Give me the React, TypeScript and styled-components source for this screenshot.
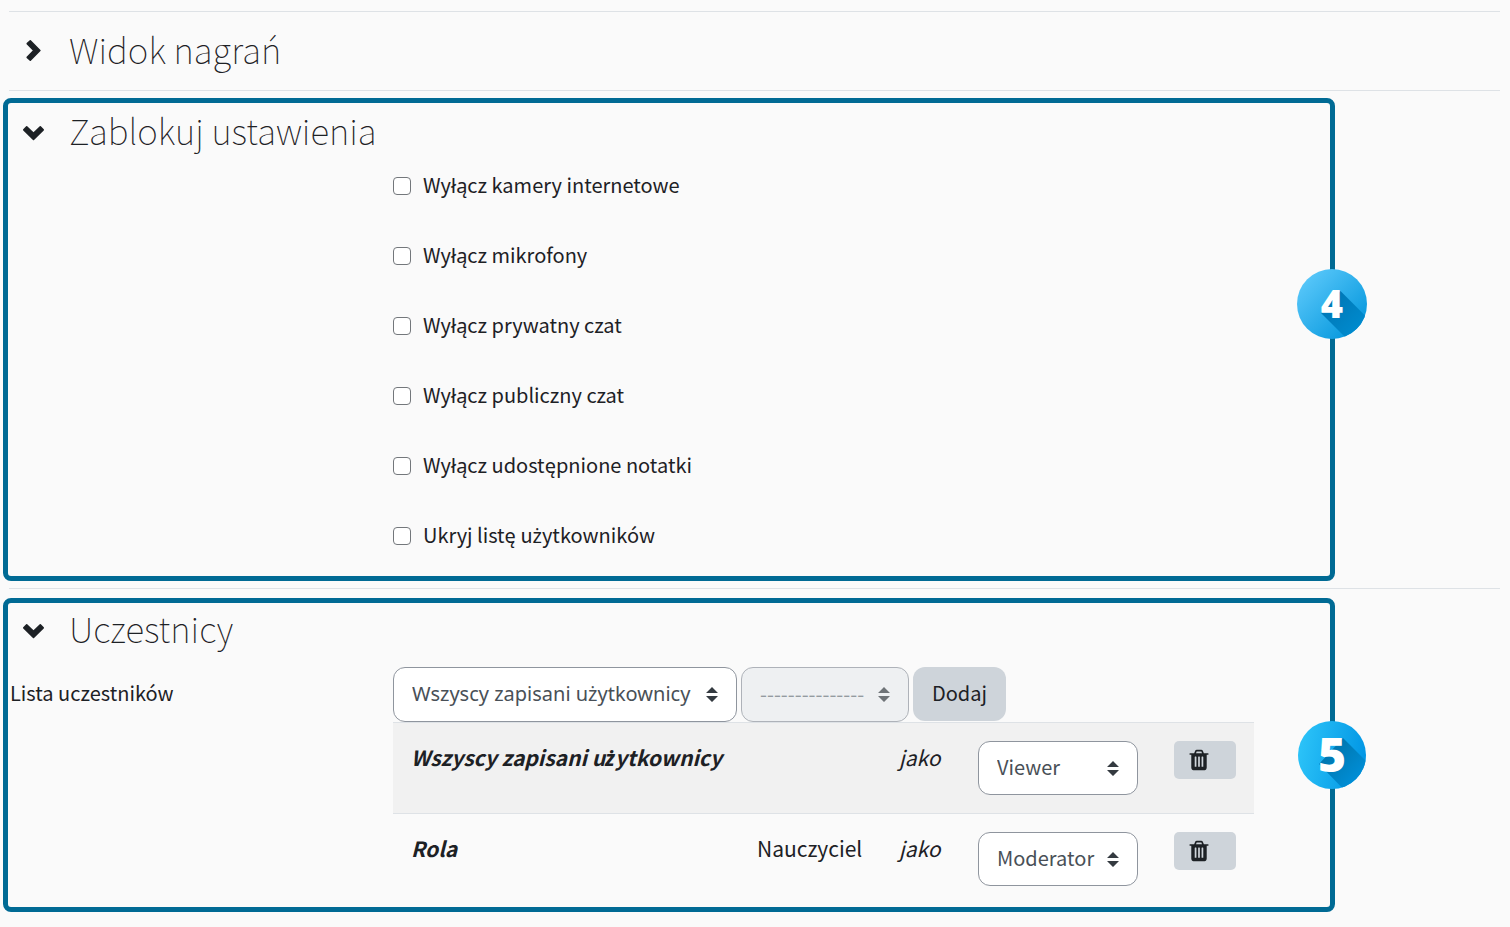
import React, { Fragment, useId } from "react";
import styled, { createGlobalStyle } from "styled-components";

const GlobalStyle = createGlobalStyle`
  *, *::before, *::after { box-sizing: border-box; }
  body {
    margin: 0;
    background: #fafafa;
    color: #1d2125;
    font-family: "Noto Sans CJK SC", "Noto Sans", sans-serif;
    font-size: 20px;
    line-height: 30px;
  }
  button, select, input { font: inherit; color: inherit; margin: 0; }
`;

const Page = styled.main`
  padding-top: 11px;
`;

const Divider = styled.hr`
  height: 1px;
  margin: 0 10px 0 9px;
  border: 0;
  background: #dee2e6;
`;

const Collapsed = styled.section`
  padding: 15px 8px;
`;

const Frame = styled.section<{ $before: number; $top: number; $bottom: number }>`
  position: relative;
  margin: ${(p) => p.$before}px 175px 7px 3px;
  padding: ${(p) => p.$top}px 0 ${(p) => p.$bottom}px;
  border: 5px solid #006a94;
  border-radius: 8px;
`;

const HeadingRow = styled.div`
  display: flex;
  align-items: center;
  gap: 22px;
  height: 48px;
  padding-left: 13px;
`;

const Toggle = styled.button`
  display: flex;
  padding: 0;
  border: 0;
  background: none;
  cursor: pointer;
`;

const Heading = styled.h3`
  margin: 0;
  padding-bottom: 4px;
  font-size: 35px;
  line-height: 44px;
  font-weight: 100;
`;

const CheckList = styled.ul`
  display: grid;
  gap: 36px;
  margin: 13px 0 0 385px;
  padding: 0;
  list-style: none;
`;

const CheckLabel = styled.label`
  display: inline-flex;
  align-items: center;
  gap: 12px;
  height: 34px;
`;

const CheckText = styled.span`
  padding-bottom: 2px;
`;

const CheckBox = styled.input`
  appearance: none;
  width: 18px;
  height: 18px;
  border: 1px solid #73777b;
  border-radius: 4px;
  background: #fff;
  &:checked { background: #006a94; }
`;

const FormRow = styled.div`
  display: grid;
  grid-template-columns: 383px auto;
  justify-content: start;
  margin-top: 13px;
  padding-left: 2px;
`;

const FieldLabel = styled.label`
  line-height: 52px;
`;

const Controls = styled.div`
  display: flex;
  gap: 4px;
`;

const SelectWrap = styled.span<{ $width: number; $disabled?: boolean }>`
  display: grid;
  align-items: center;
  width: ${(p) => p.$width}px;
  opacity: ${(p) => (p.$disabled ? 0.7 : 1)};
  > * { grid-area: 1 / 1; }
  > svg { justify-self: end; margin-right: 19px; pointer-events: none; }
`;

const SelectBox = styled.select<{ $height: number; $polish?: boolean }>`
  appearance: none;
  width: 100%;
  height: ${(p) => p.$height}px;
  padding: 0 34px 2px 18px;
  border: 1px solid #8f959e;
  border-radius: 12px;
  background: #fff;
  color: #495057;
  font-family: ${(p) => (p.$polish ? '"Noto Sans", sans-serif' : "inherit")};
  &:disabled { background: #e9ecef; color: #6a737b; opacity: 1; }
`;

const AddButton = styled.button`
  width: 93px;
  height: 54px;
  padding: 0 0 2px;
  border: 0;
  border-radius: 12px;
  background: #ced4da;
`;

const People = styled.table`
  width: 861px;
  table-layout: fixed;
  border-collapse: separate;
  border-spacing: 0;
`;

const PersonRow = styled.tr`
  &:nth-child(odd) { background: #f1f1f1; }
`;

const Cell = styled.td`
  padding: 18px;
  border-top: 1px solid #dee2e6;
  font-size: 21px;
  line-height: 32px;
  vertical-align: top;
  text-align: left;
  white-space: nowrap;
`;

const ControlCell = styled(Cell)`
  font-size: 20px;
`;

const Name = styled.span`
  font-weight: 700;
  font-style: italic;
`;

const DottedZ = styled.span`
  font-family: "Noto Sans", sans-serif;
`;

const DeleteButton = styled.button`
  display: flex;
  align-items: center;
  width: 62px;
  height: 38px;
  padding: 0 0 0 13px;
  border: 0;
  border-radius: 5px;
  background: #ced4da;
`;

const Badge = styled.svg<{ $top: number; $right: number }>`
  position: absolute;
  top: ${(p) => p.$top}px;
  right: ${(p) => p.$right}px;
`;

const BadgeDigit = styled.text`
  font-family: "Open Sans", sans-serif;
  font-weight: 800;
  fill: #fff;
  text-anchor: middle;
`;

/* The main face has no ż of its own, so that letter is set in its companion face. */
function Polish({ text }: { text: string }) {
  return (
    <>
      {text.split("ż").map((part, i) => (
        <Fragment key={i}>
          {i > 0 && <DottedZ>ż</DottedZ>}
          {part}
        </Fragment>
      ))}
    </>
  );
}

function Chevron({ open }: { open?: boolean }) {
  return (
    <svg width="26" height="26" viewBox="0 0 26 26" aria-hidden="true">
      <path
        transform={open ? "rotate(90 11.7 13.3)" : undefined}
        d="M6.2 5.7 9.3 2.8 18.9 12.5 9.3 22.2 6.2 19.3 12.8 12.5Z"
        fill="#1d2125"
        stroke="#1d2125"
        strokeWidth="1.6"
        strokeLinejoin="round"
      />
    </svg>
  );
}

function SortArrows() {
  return (
    <svg width="12" height="15" viewBox="0 0 4 5" aria-hidden="true">
      <path fill="#343a40" d="M2 0L0 2h4zm0 5L0 3h4z" />
    </svg>
  );
}

function Trash() {
  return (
    <svg width="24" height="24" viewBox="0 0 1792 1792" aria-hidden="true">
      <path
        fill="#1d2125"
        d="M704 1376v-704q0-14-9-23t-23-9h-64q-14 0-23 9t-9 23v704q0 14 9 23t23 9h64q14 0 23-9t9-23zm256 0v-704q0-14-9-23t-23-9h-64q-14 0-23 9t-9 23v704q0 14 9 23t23 9h64q14 0 23-9t9-23zm256 0v-704q0-14-9-23t-23-9h-64q-14 0-23 9t-9 23v704q0 14 9 23t23 9h64q14 0 23-9t9-23zm-544-992h448l-48-117q-7-9-17-11h-317q-10 2-17 11zm928 32v64q0 14-9 23t-23 9h-96v948q0 83-47 143.500t-113 60.5h-832q-66 0-113-58.5t-47-141.5v-952h-96q-14 0-23-9t-9-23v-64q0-14 9-23t23-9h309l70-167q15-37 54-63t79-26h320q40 0 79 26t54 63l70 167h309q14 0 23 9t9 23z"
      />
    </svg>
  );
}

type SelectProps = {
  width: number;
  height?: number;
  label?: string;
  options: string[];
  value?: string;
  disabled?: boolean;
  id?: string;
};

function Select({ width, height = 54, label, options, value, disabled, id }: SelectProps) {
  return (
    <SelectWrap $width={width} $disabled={disabled}>
      <SelectBox
        id={id}
        $height={height}
        $polish={options.some((o) => o.includes("ż"))}
        aria-label={label}
        defaultValue={value ?? options[0]}
        disabled={disabled}
      >
        {options.map((o) => (
          <option key={o}>{o}</option>
        ))}
      </SelectBox>
      <SortArrows />
    </SelectWrap>
  );
}

function SectionHeading({ title, open }: { title: string; open?: boolean }) {
  return (
    <HeadingRow>
      <Toggle type="button" aria-expanded={!!open} aria-label={title}>
        <Chevron open={open} />
      </Toggle>
      <Heading>{title}</Heading>
    </HeadingRow>
  );
}

const locks = [
  "Wyłącz kamery internetowe",
  "Wyłącz mikrofony",
  "Wyłącz prywatny czat",
  "Wyłącz publiczny czat",
  "Wyłącz udostępnione notatki",
  "Ukryj listę użytkowników",
];

const people = [
  { name: "Wszyscy zapisani użytkownicy", who: "", role: "Viewer" },
  { name: "Rola", who: "Nauczyciel", role: "Moderator" },
];

function StepFour() {
  const id = useId();
  return (
    <Badge $top={166} $right={-37} width="70" height="70" viewBox="0 0 70 70">
      <defs>
        <linearGradient id={`${id}bg`} x1="0.1" y1="0.1" x2="0.9" y2="0.9">
          <stop offset="0" stopColor="#5ac8fa" />
          <stop offset="1" stopColor="#0396dc" />
        </linearGradient>
        <linearGradient id={`${id}sh`} x1="0.2" y1="0.2" x2="0.9" y2="0.9">
          <stop offset="0" stopColor="#0079b8" />
          <stop offset="1" stopColor="#0093d8" />
        </linearGradient>
        <clipPath id={`${id}c`}>
          <circle cx="35" cy="35" r="35" />
        </clipPath>
      </defs>
      <circle cx="35" cy="35" r="35" fill={`url(#${id}bg)`} />
      <path clipPath={`url(#${id}c)`} fill={`url(#${id}sh)`} d="M43.500 22 80 58.500V78H58L24 44Z" />
      <BadgeDigit x="35" y="49" fontSize="38">4</BadgeDigit>
    </Badge>
  );
}

function StepFive() {
  const id = useId();
  return (
    <Badge $top={118} $right={-36} width="68" height="68" viewBox="0 0 68 68">
      <defs>
        <linearGradient id={`${id}bg`} x1="0" y1="0.4" x2="1" y2="0.6">
          <stop offset="0" stopColor="#2cc3f8" />
          <stop offset="1" stopColor="#0095e4" />
        </linearGradient>
        <linearGradient id={`${id}sh`} x1="0.2" y1="0.2" x2="0.8" y2="0.8">
          <stop offset="0" stopColor="#0077b0" />
          <stop offset="1" stopColor="#0095e2" />
        </linearGradient>
        <clipPath id={`${id}c`}>
          <circle cx="34" cy="34" r="34" />
        </clipPath>
      </defs>
      <circle cx="34" cy="34" r="34" fill={`url(#${id}bg)`} />
      <path clipPath={`url(#${id}c)`} fill={`url(#${id}sh)`} d="M45 17 80 52V78H55L21 43Z" />
      <BadgeDigit x="34" y="51" fontSize="48">5</BadgeDigit>
    </Badge>
  );
}

export default function App() {
  return (
    <Page lang="pl">
      <GlobalStyle />
      <Divider />
      <Collapsed>
        <SectionHeading title="Widok nagrań" />
      </Collapsed>
      <Divider />
      <Frame $before={7} $top={5} $bottom={23}>
        <SectionHeading title="Zablokuj ustawienia" open />
        <CheckList>
          {locks.map((text) => (
            <li key={text}>
              <CheckLabel>
                <CheckBox type="checkbox" />
                <CheckText>
                  <Polish text={text} />
                </CheckText>
              </CheckLabel>
            </li>
          ))}
        </CheckList>
        <StepFour />
      </Frame>
      <Divider />
      <Frame $before={9} $top={3} $bottom={3}>
        <SectionHeading title="Uczestnicy" open />
        <FormRow>
          <FieldLabel htmlFor="participants">Lista uczestników</FieldLabel>
          <div>
            <Controls>
              <Select
                id="participants"
                width={344}
                height={55}
                options={["Wszyscy zapisani użytkownicy", "Rola"]}
              />
              <Select width={168} height={55} label="Uczestnik" options={["---------------"]} disabled />
              <AddButton type="button">Dodaj</AddButton>
            </Controls>
            <People>
              <colgroup>
                <col width="346" />
                <col width="142" />
                <col width="79" />
                <col width="196" />
                <col width="98" />
              </colgroup>
              <tbody>
                {people.map((p) => (
                  <PersonRow key={p.name}>
                    <Cell as="th" scope="row">
                      <Name>
                        <Polish text={p.name} />
                      </Name>
                    </Cell>
                    <Cell>{p.who}</Cell>
                    <Cell>
                      <em>jako</em>
                    </Cell>
                    <ControlCell>
                      <Select width={160} label={p.name} options={["Viewer", "Moderator"]} value={p.role} />
                    </ControlCell>
                    <ControlCell>
                      <DeleteButton type="button" aria-label={`Usuń ${p.name}`}>
                        <Trash />
                      </DeleteButton>
                    </ControlCell>
                  </PersonRow>
                ))}
              </tbody>
            </People>
          </div>
        </FormRow>
        <StepFive />
      </Frame>
    </Page>
  );
}
